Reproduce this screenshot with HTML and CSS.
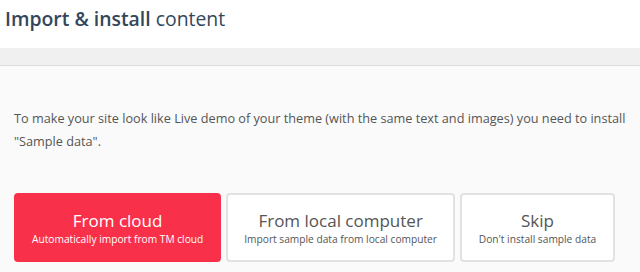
FILE: index.html
```html
<!DOCTYPE html>
<html lang="en">
<head>
    <meta charset="UTF-8">
    <meta name="viewport" content="width=device-width, initial-scale=1.0">
    <title>Import &amp; install content</title>
    <link rel="stylesheet" href="styles.css">
</head>
<body>

<div class="page-header">
    <h1><strong>Import &amp; install</strong> content</h1>
</div>
<div class="header-band"></div>

<div class="wizard">
    <p class="wizard-intro">To make your site look like Live demo of your theme (with the same text and images) you need to install "Sample data".</p>
    <div class="wizard-buttons">
        <a href="#" class="wizard-btn primary">
            <span class="btn-title">From cloud</span>
            <span class="btn-desc">Automatically import from TM cloud</span>
        </a>
        <a href="#" class="wizard-btn">
            <span class="btn-title">From local computer</span>
            <span class="btn-desc">Import sample data from local computer</span>
        </a>
        <a href="#" class="wizard-btn skip">
            <span class="btn-title">Skip</span>
            <span class="btn-desc">Don't install sample data</span>
        </a>
    </div>
</div>

</body>
</html>
```

FILE: styles.css
```css
body {
    font-family: "Open Sans", Arial, sans-serif;
    margin: 0;
    background-color: #fafafa;
    color: #555;
}
.page-header {
    background-color: #fff;
    height: 48px;
    padding: 0 5px;
}
.page-header h1 {
    margin: 0;
    font-size: 19.4px;
    font-weight: 400;
    line-height: 38px;
    color: #34465a;
}
.page-header h1 strong {
    font-weight: 600;
}
.header-band {
    height: 17px;
    background-color: #f0f0f0;
    border-bottom: 1px solid #dcdcdc;
}
.wizard {
    padding: 41px 6px 0 14px;
}
.wizard-intro {
    margin: 0;
    font-size: 12.7px;
    line-height: 23px;
    color: #555;
}
.wizard-buttons {
    display: flex;
    gap: 5px;
    margin-top: 40px;
}
.wizard-btn {
    display: flex;
    flex-direction: column;
    align-items: center;
    justify-content: center;
    height: 65px;
    padding: 0 16px;
    border: 2px solid #e2e2e2;
    border-radius: 4px;
    background-color: #fff;
    color: #555;
    text-decoration: none;
}
.wizard-btn.primary {
    background-color: #f9304a;
    border-color: #f9304a;
    color: #fff;
}
.wizard-btn.skip {
    min-width: 119px;
}
.btn-title {
    font-size: 17px;
    line-height: 22px;
}
.btn-desc {
    font-size: 10.2px;
    line-height: 14px;
}
```
